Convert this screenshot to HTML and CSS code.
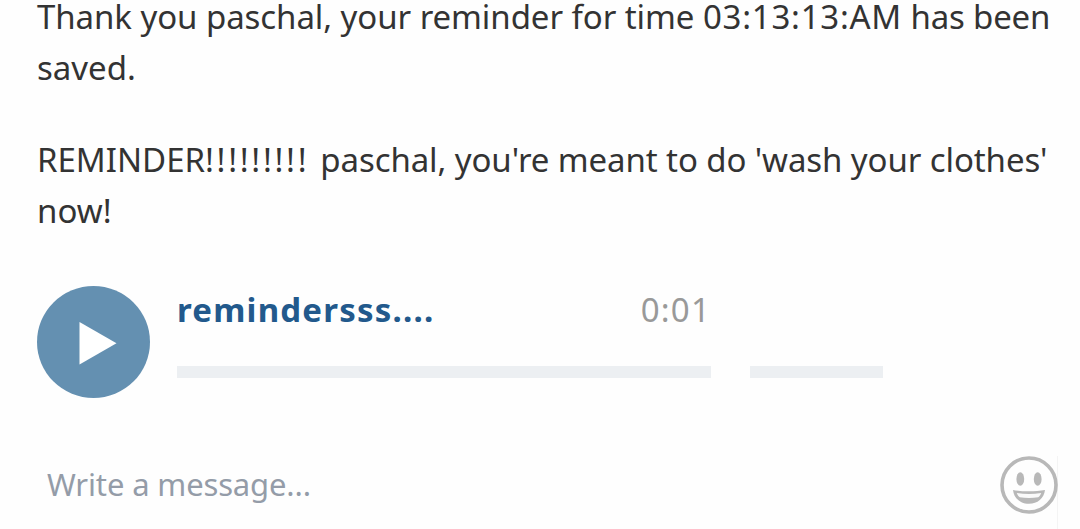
FILE: index.html
```
<!DOCTYPE html>
<html lang="en">

<head>
    <meta charset="UTF-8">
    <meta name="viewport" content="width=device-width, initial-scale=1.0">
    <title>Reminder Chat</title>
    <link rel="stylesheet" href="styles.css">
</head>

<body>
    <div class="chat">
        <!-- Messages -->
        <div class="messages">
            <p class="message"><span class="intro">Thank you paschal, your reminder for time</span> <span class="time">03:13:13:AM</span> <span class="status">has been</span><br>saved.</p>
            <p class="message">REMINDER<span class="marks">!!!!!!!!!</span> <span class="task">paschal, you're meant to do 'wash your clothes'</span><br>now!</p>
        </div>

        <!-- Audio player -->
        <div class="audio">
            <button class="play-btn" aria-label="Play">
                <svg viewBox="0 0 113 112" width="113" height="112">
                    <ellipse cx="56.5" cy="56" rx="56.5" ry="56" fill="#6490b1" />
                    <path d="M42.5 36v42.5L79.500 57.200z" fill="#fff" />
                </svg>
            </button>
            <div class="track">
                <div class="track-info">
                    <span class="title">remindersss....</span>
                    <span class="duration">0:01</span>
                </div>
                <div class="bar"></div>
            </div>
            <div class="bar volume"></div>
        </div>

        <!-- Input Section -->
        <div class="input-group">
            <input type="text" placeholder="Write a message...">
            <button class="emoji-btn" aria-label="Emoji">
                <svg viewBox="0 0 58 58" width="58" height="58">
                    <circle cx="29" cy="29" r="27" fill="none" stroke="#b8b8b8" stroke-width="3.600" />
                    <ellipse cx="20.300" cy="23" rx="3.900" ry="6.800" fill="#b8b8b8" />
                    <ellipse cx="37.700" cy="23" rx="3.900" ry="6.800" fill="#b8b8b8" />
                    <path d="M13 34c10 1.800 22 1.800 32 0-1 8.500-7.500 13.800-16 13.800S14 42.500 13 34z" fill="#b8b8b8" />
                    <path d="M16.800 37c8 1.200 16.400 1.200 24.400 0-.6 2-1.600 3.300-3 4.300-6 1-12.400 1-18.400 0-1.400-1-2.400-2.300-3-4.300z" fill="#fafafa" />
                </svg>
            </button>
        </div>
    </div>
</body>

</html>
```
FILE: styles.css
```
* {
    margin: 0;
    padding: 0;
    box-sizing: border-box;
}

body {
    font-family: 'Noto Sans', sans-serif;
    background-color: #fefefe;
    overflow: hidden;
}

button {
    border: none;
    background: none;
    cursor: pointer;
}

svg {
    display: block;
}

.chat {
    display: flex;
    flex-direction: column;
    height: 529px;
    padding-left: 37px;
}

.messages {
    margin-top: -9px;
}

.message {
    font-size: 33px;
    line-height: 51px;
    color: #333;
    white-space: nowrap;
}

.message + .message {
    margin-top: 41px;
}

.intro {
    letter-spacing: -0.07px;
}

.time {
    letter-spacing: 0.75px;
}

.status {
    letter-spacing: -0.2px;
}

.marks {
    margin-right: 2.5px;
    letter-spacing: 2.7px;
}

.task {
    letter-spacing: -0.1px;
}

.audio {
    display: flex;
    margin-top: 50px;
    height: 112px;
}

.track {
    width: 534px;
    margin-left: 27px;
}

.track-info {
    display: flex;
    justify-content: space-between;
    height: 80px;
    font-size: 33px;
    line-height: 48px;
    letter-spacing: 1.2px;
}

.title {
    font-weight: bold;
    color: #22598c;
}

.duration {
    color: #999;
}

.bar {
    height: 12px;
    background-color: #eceff2;
}

.volume {
    width: 133px;
    margin: 80px 0 0 39px;
}

.input-group {
    display: flex;
    justify-content: space-between;
    align-items: flex-start;
    margin-top: 58px;
    height: 73px;
    width: 1021px;
    border-right: 1px solid #f4f4f4;
}

.input-group input {
    flex: 1;
    height: 56px;
    padding-left: 10px;
    border: none;
    outline: none;
    background: none;
    font-family: inherit;
    font-size: 31px;
    letter-spacing: -0.15px;
}

.input-group input::placeholder {
    color: #949ca8;
}

.emoji-btn {
    margin-right: -1px;
}
```
